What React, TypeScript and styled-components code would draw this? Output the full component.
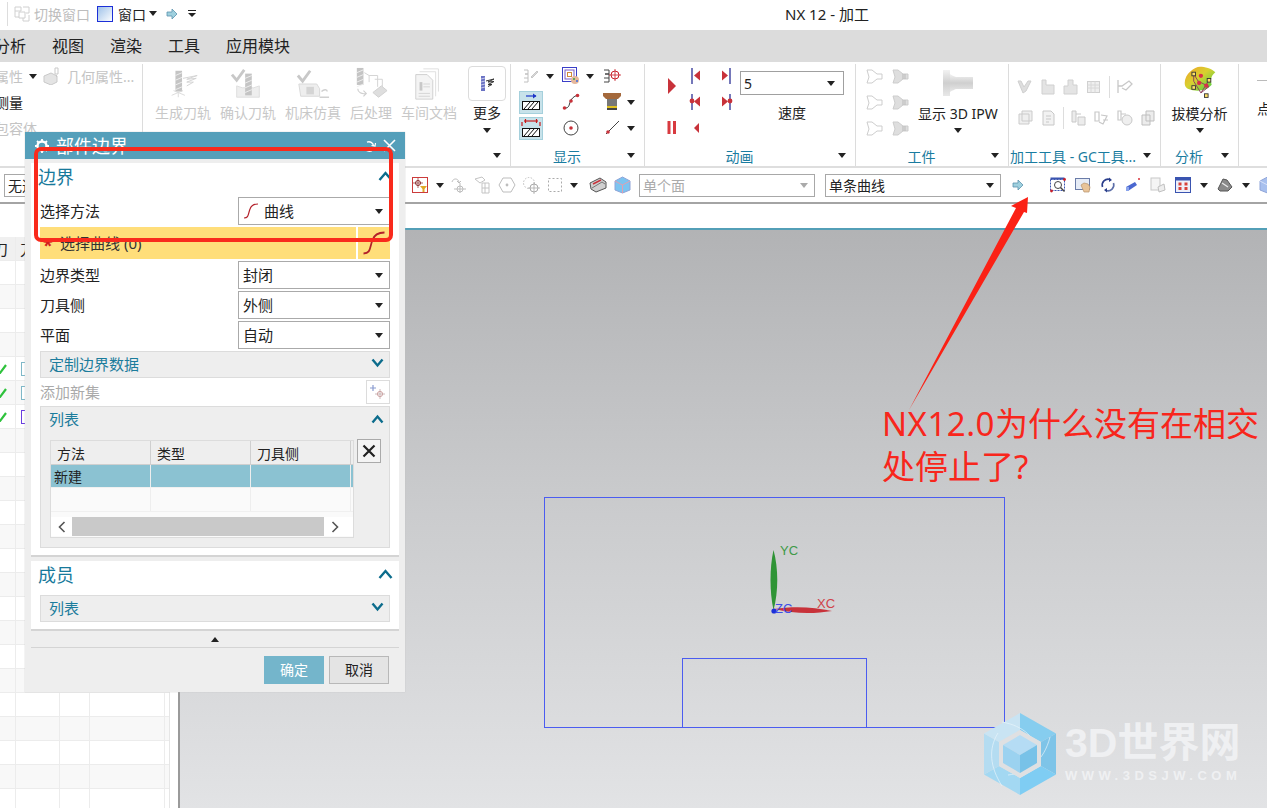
import * as React from "react";
import styled, { createGlobalStyle } from "styled-components";

const GlobalStyle = createGlobalStyle`
  html, body {
    margin: 0;
    padding: 0;
    background: #fff;
  }
  * {
    box-sizing: border-box;
  }
`;

const FONT = `"Noto Sans", "Noto Sans CJK SC", sans-serif`;

const Page = styled.div`
  position: relative;
  width: 1267px;
  height: 808px;
  overflow: hidden;
  display: flex;
  flex-direction: column;
  font-family: ${FONT};
  font-size: 15px;
  color: #222;
  background: #fff;
`;

/* ---------- top bars ---------- */

const TitleBar = styled.div`
  height: 30px;
  padding-bottom: 3px;
  display: grid;
  grid-template-columns: 785px auto;
  align-items: center;
  background: #fff;
`;

const QuickBar = styled.div`
  display: flex;
  align-items: center;
  font-size: 14px;
  white-space: nowrap;
`;

const QuickSep = styled.span`
  width: 1px;
  height: 24px;
  margin: 0 6px 0 7px;
  background: #ddd;
`;

const QuickText = styled.span<{ $off?: boolean }>`
  margin: 0 ${(p) => (p.$off ? 7 : 3)}px 0 ${(p) => (p.$off ? 4 : 5)}px;
  color: ${(p) => (p.$off ? "#bdbdbd" : "#222")};
`;

const QuickGap = styled.span<{ $w: number }>`
  flex: 0 0 ${(p) => p.$w}px;
`;

const AppTitle = styled.div`
  font-size: 15px;
  color: #222;
`;

const MenuBar = styled.div`
  height: 32px;
  padding-bottom: 2px;
  display: flex;
  align-items: center;
  gap: 26px;
  background: #dcdcdc;
  font-size: 16px;
  overflow: hidden;
`;

const MenuItem = styled.span<{ $cut?: boolean }>`
  color: #222;
  margin-left: ${(p) => (p.$cut ? -6 : 0)}px;
`;

/* ---------- ribbon ---------- */

const Ribbon = styled.div`
  height: 106px;
  display: flex;
  background: #fff;
  border-bottom: 2px solid #dedede;
  overflow: hidden;
`;

const Group = styled.div<{ $w: number }>`
  position: relative;
  flex: 0 0 ${(p) => p.$w}px;
  width: ${(p) => p.$w}px;
  height: 102px;
  margin-top: 2px;
  display: flex;
  flex-direction: column;
  border-right: 1px solid #dcdcdc;
`;

const GroupBody = styled.div<{ $center?: boolean }>`
  flex: 1;
  display: flex;
  justify-content: ${(p) => (p.$center ? "center" : "flex-start")};
  min-height: 0;
`;

const GroupFoot = styled.div`
  height: 22px;
  display: flex;
  align-items: center;
  color: #1a7ca0;
  font-size: 14px;
`;

const FootLabel = styled.span<{ $long?: boolean }>`
  flex: 1;
  min-width: 0;
  padding: 2px 0 0 ${(p) => (p.$long ? 1 : 5)}px;
  text-align: ${(p) => (p.$long ? "left" : "center")};
  white-space: nowrap;
  overflow: ${(p) => (p.$long ? "visible" : "hidden")};
`;

const FootCaret = styled.span`
  flex: 0 0 26px;
  display: flex;
  justify-content: center;
`;

const Caret = styled.span<{ $up?: boolean; $c?: string }>`
  display: inline-block;
  flex: none;
  width: 0;
  height: 0;
  border-left: 4px solid transparent;
  border-right: 4px solid transparent;
  border-${(p) => (p.$up ? "bottom" : "top")}: 5px solid ${(p) => p.$c || "#222"};
`;

const PropColumn = styled.div`
  display: flex;
  flex-direction: column;
  margin: -1px 0 0 -5px;
  font-size: 14px;
  white-space: nowrap;
`;

const PropRow = styled.div<{ $off?: boolean }>`
  height: 26px;
  display: flex;
  align-items: center;
  gap: 6px;
  color: ${(p) => (p.$off ? "#c4c4c4" : "#222")};
`;

const BigTools = styled.div`
  display: flex;
  gap: 9px;
  padding-left: 12px;
`;

const BigTool = styled.div<{ $off?: boolean; $ml?: number }>`
  margin-left: ${(p) => p.$ml || 0}px;
  display: flex;
  flex-direction: column;
  align-items: center;
  font-size: 14px;
  white-space: nowrap;
  color: ${(p) => (p.$off ? "#c8c8c8" : "#222")};
`;

const BigIcon = styled.div<{ $framed?: boolean }>`
  height: 35px;
  width: ${(p) => (p.$framed ? "38px" : "auto")};
  margin-top: 2px;
  display: flex;
  align-items: center;
  justify-content: center;
  border: 1px solid ${(p) => (p.$framed ? "#dcdcdc" : "transparent")};
  border-radius: 4px;
`;

const BigLabel = styled.div`
  height: 24px;
  margin-bottom: 3px;
  line-height: 24px;
`;

const IconGrid = styled.div<{ $cols: string; $pad: number }>`
  display: grid;
  grid-template-columns: ${(p) => p.$cols};
  grid-auto-rows: 26px;
  margin-top: -1px;
  padding-left: ${(p) => p.$pad}px;
  align-items: center;
`;

const GridCell = styled.div<{ $center?: boolean }>`
  display: flex;
  align-items: center;
  justify-content: ${(p) => (p.$center ? "center" : "flex-start")};
  gap: 3px;
  min-width: 0;
`;

const IconBox = styled.span<{ $on?: boolean }>`
  width: 24px;
  height: 23px;
  display: flex;
  align-items: center;
  justify-content: center;
  background: ${(p) => (p.$on ? "#c8e2ea" : "transparent")};
  border: 1px solid ${(p) => (p.$on ? "#a5d0dc" : "transparent")};
`;

const PlaySpan = styled.div`
  grid-row: 1 / span 2;
  display: flex;
  justify-content: center;
  padding-bottom: 6px;
`;

const SpeedColumn = styled.div`
  width: 104px;
  padding-top: 7px;
  display: flex;
  flex-direction: column;
  align-items: center;
  font-size: 14px;
`;

const SpeedSelect = styled.div`
  width: 104px;
  height: 24px;
  padding: 0 8px 0 3px;
  display: flex;
  align-items: center;
  justify-content: space-between;
  border: 1px solid #a0a0a0;
`;

const SpeedLabel = styled.div`
  margin-top: 7px;
`;

const CenterTool = styled.div`
  display: flex;
  flex-direction: column;
  align-items: center;
  font-size: 14px;
  white-space: nowrap;
`;

const ToolArt = styled.div`
  height: 38px;
  display: flex;
  align-items: center;
  justify-content: center;
`;

const ToolText = styled.div`
  height: 24px;
  line-height: 24px;
`;

const ToolCaret = styled.div`
  height: 9px;
  display: flex;
  align-items: center;
`;

const IconRows = styled.div`
  display: flex;
  flex-direction: column;
  gap: 9px;
  padding: 12px 0 0 8px;
`;

const IconLine = styled.div`
  display: flex;
  align-items: center;
  gap: 7px;
`;

const ThinSep = styled.span`
  width: 1px;
  height: 22px;
  background: #ddd;
`;

const PointStub = styled.div`
  padding: 10px 0 0 18px;
  display: flex;
  flex-direction: column;
  font-size: 14px;
  white-space: nowrap;
`;

const StubDash = styled.div`
  width: 12px;
  height: 1px;
  background: #bbb;
  margin: 8px 0 17px;
`;

/* ---------- selection bar ---------- */

const SelectBar = styled.div`
  height: 36px;
  padding-left: 4px;
  display: flex;
  align-items: center;
  gap: 8px;
  background: #fff;
  border-bottom: 2px solid #a4a4a4;
  overflow: hidden;
`;

const BarSelect = styled.div<{ $w: number; $off?: boolean; $gap?: number }>`
  flex: 0 0 ${(p) => p.$w}px;
  height: 23px;
  padding: 0 6px 0 3px;
  margin-right: ${(p) => p.$gap || 0}px;
  display: flex;
  align-items: center;
  justify-content: space-between;
  font-size: 14px;
  color: ${(p) => (p.$off ? "#aaa" : "#222")};
  border: 1px solid #a8a8a8;
`;

const FilterBtn = styled.span`
  width: 16px;
  height: 16px;
  display: flex;
  align-items: center;
  justify-content: center;
  border: 1px solid #cc3b3b;
`;

const BarSep = styled.span`
  width: 1px;
  height: 28px;
  margin: 0 5px 0 5px;
  background: #d4d4d4;
`;

const BarGroup = styled.div<{ $gap: number; $ml?: number }>`
  display: flex;
  align-items: center;
  gap: ${(p) => p.$gap}px;
  margin-left: ${(p) => p.$ml || 0}px;
`;

/* ---------- workspace ---------- */

const Workspace = styled.div`
  flex: 1;
  min-height: 0;
  display: flex;
`;

const Navigator = styled.div`
  flex: 0 0 180px;
  padding-top: 33px;
  border-right: 2px solid #9a9a9a;
  background: #fff;
  overflow: hidden;
`;

const NavTable = styled.div`
  width: 170px;
  height: 100%;
  border-right: 1px solid #e6e6e6;
  overflow: hidden;
`;

const NavRow = styled.div<{ $head?: boolean; $alt?: boolean }>`
  height: 24px;
  display: grid;
  grid-template-columns: 16px 44px 30px 75px 4px;
  background: ${(p) => (p.$head ? "#f0f0f0" : p.$alt ? "#f8f8f8" : "#fff")};
  border-bottom: 1px solid #ececec;
`;

const NavCell = styled.div<{ $cut?: boolean }>`
  display: flex;
  align-items: center;
  border-right: 1px solid #ececec;
  font-size: 15px;
  overflow: hidden;
  white-space: nowrap;
  padding-left: ${(p) => (p.$cut ? 0 : 4)}px;
  text-indent: ${(p) => (p.$cut ? -7 : 0)}px;
`;

const NavMark = styled.span<{ $c: string }>`
  width: 9px;
  height: 14px;
  margin-left: 1px;
  border: 1px solid ${(p) => p.$c};
  background: #fff;
`;

const ViewColumn = styled.div`
  flex: 1;
  display: flex;
  flex-direction: column;
  min-width: 0;
`;

const ViewTabs = styled.div`
  height: 24px;
  background: #fff;
`;

const Canvas = styled.div`
  position: relative;
  flex: 1;
  background: linear-gradient(#b2b3b5 0%, #c9cacc 45%, #e2e3e5 100%);
  border-top: 2px solid #539fb7;
`;

const SketchRect = styled.div<{ $l: number; $t: number; $w: number; $h: number }>`
  position: absolute;
  left: ${(p) => p.$l}px;
  top: ${(p) => p.$t}px;
  width: ${(p) => p.$w}px;
  height: ${(p) => p.$h}px;
  border: 1px solid #4b5cf0;
`;

const Triad = styled.svg`
  position: absolute;
  left: 560px;
  top: 300px;
`;

const Watermark = styled.div`
  position: absolute;
  left: 804px;
  top: 483px;
  display: flex;
  gap: 9px;
`;

const WatermarkText = styled.div`
  padding-top: 10px;
  font-family: "Liberation Sans", "Noto Sans CJK SC", sans-serif;
  color: #eff0f2;
`;

const WatermarkName = styled.div`
  font-size: 41px;
  line-height: 40px;
  font-weight: 700;
  white-space: nowrap;
`;

const WatermarkUrl = styled.div`
  margin-top: 6px;
  font-size: 13px;
  line-height: 14px;
  letter-spacing: 4.5px;
  font-weight: 700;
  white-space: nowrap;
`;

/* ---------- dialog ---------- */

const Dialog = styled.div`
  position: absolute;
  left: 25px;
  top: 132px;
  width: 380px;
  height: 560px;
  display: flex;
  flex-direction: column;
  background: #eeeeee;
  box-shadow: 0 0 1px #bbb;
`;

const DialogTitle = styled.div`
  height: 27px;
  padding: 0 9px;
  display: flex;
  align-items: center;
  gap: 7px;
  background: #559fba;
  color: #fff;
  font-size: 18px;
  flex: none;
`;

const DialogTitleText = styled.span`
  flex: 1;
  line-height: 27px;
  margin: 2px 0 0 -1px;
`;

const DialogBody = styled.div`
  margin: 4px 6px 0;
  display: flex;
  flex-direction: column;
  gap: 4px;
`;

const Section = styled.div<{ $pb: number }>`
  padding: 0 9px ${(p) => p.$pb}px;
  display: flex;
  flex-direction: column;
  gap: 2px;
  background: #fff;
  border-bottom: 2px solid #d4d4d4;
`;

const SectionHead = styled.div`
  height: 32px;
  margin: 0 -3px 0 -2px;
  padding-bottom: 6px;
  display: flex;
  align-items: center;
  justify-content: space-between;
  font-size: 18px;
  color: #17799b;
`;

const FieldRow = styled.div`
  height: 28px;
  display: flex;
  align-items: center;
  justify-content: space-between;
`;

const FieldLabel = styled.span`
  margin-top: -2px;
`;

const FieldSelect = styled.div`
  width: 152px;
  height: 28px;
  padding: 0 6px 0 4px;
  display: flex;
  align-items: center;
  gap: 5px;
  border: 1px solid #aaaaaa;
  background: #fff;
`;

const FieldValue = styled.span`
  flex: 1;
  margin-top: -2px;
`;

const PickRow = styled.div`
  height: 32px;
  display: flex;
  gap: 2px;
`;

const PickMain = styled.div`
  flex: 1;
  padding: 0 0 2px 3px;
  display: flex;
  align-items: center;
  gap: 7px;
  background: #ffde7a;
  color: #333;
`;

const PickStar = styled.span`
  width: 10px;
  color: #d21f1f;
  font-size: 18px;
  line-height: 18px;
  font-weight: 700;
  padding-top: 5px;
`;

const PickSide = styled.div`
  width: 32px;
  display: flex;
  align-items: center;
  justify-content: center;
  background: #ffde7a;
`;

const Panel = styled.div`
  background: #eeeeee;
  border: 1px solid #dcdcdc;
`;

const PanelHead = styled.div`
  height: 25px;
  padding: 0 5px 3px 8px;
  display: flex;
  align-items: center;
  justify-content: space-between;
  color: #1b7c9c;
`;

const AddRow = styled.div`
  height: 24px;
  display: flex;
  align-items: center;
  justify-content: space-between;
  color: #aaa;
`;

const AddBtn = styled.span`
  width: 24px;
  height: 24px;
  display: flex;
  align-items: center;
  justify-content: center;
  border: 1px solid #dcdcdc;
`;

const ListHead = styled(PanelHead)`
  height: 28px;
  padding-bottom: 5px;
  margin-bottom: 5px;
`;

const ListBody = styled.div`
  padding: 0 8px 9px 9px;
  display: flex;
  gap: 3px;
  align-items: flex-start;
`;

const ListTable = styled.div`
  width: 304px;
  height: 98px;
  padding-bottom: 1px;
  display: flex;
  flex-direction: column;
  border: 1px solid #dcdcdc;
  background: #fafafa;
`;

const ListRow = styled.div<{ $sel?: boolean; $head?: boolean }>`
  height: ${(p) => (p.$sel ? 23 : 24)}px;
  flex: none;
  display: grid;
  grid-template-columns: 100px 100px 100px 1fr;
  background: ${(p) => (p.$head ? "#eeeeee" : p.$sel ? "#8bc2d2" : "#fafafa")};
  border-bottom: 1px solid ${(p) => (p.$head ? "#cfcfcf" : "#f0f0f0")};
`;

const ListCell = styled.div<{ $head?: boolean }>`
  padding-left: ${(p) => (p.$head ? 6 : 3)}px;
  display: flex;
  align-items: center;
  font-size: 14px;
  border-right: 1px solid ${(p) => (p.$head ? "#cfcfcf" : "#eeeeee")};
`;

const ScrollBar = styled.div`
  height: 19px;
  margin-top: auto;
  display: flex;
  align-items: center;
  background: #fff;
`;

const ScrollEnd = styled.span`
  flex: 0 0 21px;
  display: flex;
  justify-content: center;
`;

const ScrollThumb = styled.div`
  width: 252px;
  height: 100%;
  background: #c9c9c9;
`;

const ClearBtn = styled.span`
  width: 24px;
  height: 24px;
  margin-top: -1px;
  display: flex;
  align-items: center;
  justify-content: center;
  border: 1px solid #aaa;
  background: #f4f4f4;
`;

const ExpandStrip = styled.div`
  margin-top: -4px;
  height: 17px;
  display: flex;
  align-items: center;
  justify-content: center;
  border-bottom: 1px solid #d4d4d4;
`;

const DialogFoot = styled.div`
  padding: 8px 16px 0 0;
  display: flex;
  justify-content: flex-end;
  gap: 5px;
`;

const FootBtn = styled.button<{ $primary?: boolean }>`
  width: 60px;
  height: 28px;
  padding: 0 0 2px;
  font-family: inherit;
  font-size: 14px;
  color: ${(p) => (p.$primary ? "#fff" : "#222")};
  background: ${(p) => (p.$primary ? "#74b5cb" : "#e4e4e4")};
  border: 1px solid ${(p) => (p.$primary ? "#74b5cb" : "#b8b8b8")};
`;

/* ---------- red annotations ---------- */

const RedBox = styled.div`
  position: absolute;
  left: 34px;
  top: 147px;
  width: 359px;
  height: 95px;
  border: 4px solid #f92a1c;
  border-radius: 7px;
`;

const RedArrow = styled.svg`
  position: absolute;
  left: 900px;
  top: 190px;
`;

const RedNote = styled.div`
  position: absolute;
  left: 882px;
  top: 402px;
  width: 380px;
  font-size: 33px;
  line-height: 43px;
  color: #f8261c;
`;

const NoteLatin = styled.span`
  letter-spacing: 0.5px;
`;

/* ---------- icons ---------- */

const Ic: React.FC<{ w?: number; h?: number; v?: string; children: React.ReactNode }> = ({
  w = 16,
  h = 16,
  v,
  children,
}) => (
  <svg width={w} height={h} viewBox={v || `0 0 ${w} ${h}`} fill="none" style={{ flex: "none" }}>
    {children}
  </svg>
);

const Chevron: React.FC<{ up?: boolean; big?: boolean }> = ({ up, big }) => (
  <Ic w={big ? 15 : 13} h={10}>
    <path
      d={up ? (big ? "M1.5 9 7.5 2l6 7" : "M1.5 8.5 6.5 2.5l5 6") : "M1.5 1.5 6.5 7.5l5-6"}
      stroke="#0c6c8c"
      strokeWidth={2.4}
    />
  </Ic>
);

const CurveIcon: React.FC<{ s?: number }> = ({ s = 16 }) => (
  <Ic w={s} h={s} v="0 0 16 16">
    <path d="M1 15c5 0 4-4 6-9 1-3 3-5 8-5" stroke="#b3202a" strokeWidth={1.2} />
  </Ic>
);

const GearIcon = () => (
  <Ic>
    <circle cx={8} cy={8} r={4.5} stroke="#fff" strokeWidth={2.4} />
    <path d="M8 1v3M8 12v3M1 8h3M12 8h3M3 3l2 2M11 11l2 2M13 3l-2 2M5 11l-2 2" stroke="#fff" strokeWidth={1.8} />
  </Ic>
);

const Refresh = () => (
  <Ic w={14} h={14}>
    <path d="M3 9a4.6 4.6 0 0 0 8 1.5M5 3.2A4.6 4.6 0 0 1 11.5 7" stroke="#fff" strokeWidth={1.4} />
    <path d="M9.5 6.5 13 7l.5-3" stroke="#fff" strokeWidth={1.2} />
  </Ic>
);

const CloseX = () => (
  <Ic w={13} h={13}>
    <path d="M1 1l11 11M12 1 1 12" stroke="#fff" strokeWidth={1.6} />
  </Ic>
);

const Arrow = () => (
  <Ic w={12} h={12}>
    <path d="M1 4h5V1l5 5-5 5V8H1z" fill="#9fd0de" stroke="#5c93ad" strokeWidth={0.8} />
  </Ic>
);

const WindowIcon = () => (
  <Ic>
    <defs>
      <linearGradient id="winGrad" x1="0" y1="0" x2="1" y2="1">
        <stop offset="0" stopColor="#9cc0e8" />
        <stop offset="1" stopColor="#fff" />
      </linearGradient>
    </defs>
    <rect x={0.5} y={0.5} width={15} height={15} fill="url(#winGrad)" stroke="#1c2fd8" />
  </Ic>
);

const SwitchIcon = () => (
  <Ic>
    <path d="M1 1h6v4H1zM1 5v6h4M9 1h6v6h-3M5 6h6v6H5zM9 12v3h6V9" stroke="#d0d0d0" strokeWidth={1} />
  </Ic>
);

const BarDrop = () => (
  <Ic w={10} h={8}>
    <path d="M1 .5h8" stroke="#222" />
    <path d="M1 3h8L5 7z" fill="#222" />
  </Ic>
);

const GEOM_GRAY = "#c9c9c9";

const Mill: React.FC<{ x: number; y: number; h: number; c?: string }> = ({ x, y, h, c = "#c4c4c4" }) => (
  <g>
    <rect x={x} y={y} width={7} height={h} fill={c} />
    <path
      d={`M${x} ${y + 5}l7-3M${x} ${y + 10}l7-3M${x} ${y + 15}l7-3M${x} ${y + 20}l7-3`}
      stroke="#eee"
      strokeWidth={1}
    />
  </g>
);

const ToolpathArt = () => (
  <Ic w={36} h={34} v="0 0 36 36">
    <Mill x={10} y={4} h={22} />
    <path d="M18 12 33 9 22 13l10-1-10 4 7 0-7 4" stroke="#d2d2d2" strokeWidth={1} />
    <path d="M6 30l7-3 7 3M13 27v5M8 25l5 2 5-2" stroke="#dadada" strokeWidth={1} />
  </Ic>
);

const VerifyArt = () => (
  <Ic w={36} h={34} v="0 0 36 36">
    <path d="M1 8l5 6L14 3" stroke="#c8c8c8" strokeWidth={3} />
    <path d="M6 20v12h24V20l-6 2H12z" fill="#eeeeee" stroke="#dedede" />
    <Mill x={15} y={7} h={23} />
  </Ic>
);

const MachineArt = () => (
  <Ic w={36} h={34} v="0 0 36 36">
    <path d="M2 9l5 6 8-11" stroke="#c8c8c8" strokeWidth={3} />
    <path d="M3 18h19l3 5v8H5z" fill="#eeeeee" stroke="#d8d8d8" />
    <rect x={11} y={21} width={8} height={8} fill="#d4d4d4" />
    <path d="M27 26c3-3 6-2 6 0M25 32h10" stroke="#d0d0d0" strokeWidth={1.5} />
  </Ic>
);

const PostArt = () => (
  <Ic w={36} h={34} v="0 0 36 36">
    <Mill x={3} y={1} h={18} />
    <path d="M11 6l5 3h9v12M16 9v7M22 13h8v8" stroke="#d2d2d2" />
    <path d="M20 27l9-7 6 5-9 7z" fill="#dedede" stroke="#cfcfcf" />
    <path d="M4 23c0 4 4 6 9 5M10 25l3 3-3 3" stroke="#cfcfcf" strokeWidth={1.2} />
  </Ic>
);

const DocArt = () => (
  <Ic w={36} h={34} v="0 0 36 36">
    <path d="M12 2h16v24M8 5h17v26" stroke="#dedede" />
    <path d="M4 8h12l6 6v20H4z" fill="#f4f4f4" stroke="#cfcfcf" />
    <rect x={8} y={16} width={3} height={9} fill="#c8c8c8" />
    <path d="M12 18h7M12 21h7M7 28h12M7 31h12" stroke="#d4d4d4" />
  </Ic>
);

const MoreArt = () => (
  <Ic w={18} h={18}>
    <rect x={3} y={1} width={4} height={15} fill="#6a72c4" />
    <path d="M3 4l4-1M3 7l4-1M3 10l4-1M3 13l4-1" stroke="#c5c8ea" />
    <path d="M8 6l8-2-6 3 6-.5-6 3 4 0-4 2" stroke="#333" strokeWidth={1} />
  </Ic>
);

const ScrewDim = () => (
  <Ic>
    <path d="M1 2h4v4H2M2 6h3v4H1M1 14h4v-4" stroke="#c0c0c0" strokeWidth={1} />
    <path d="M8 9l6-6 1 1-6 6z" fill="#d8d8d8" stroke="#c8c8c8" />
  </Ic>
);

const NestIcon = () => (
  <Ic w={18} h={18}>
    <rect x={0.5} y={0.5} width={14} height={14} stroke="#3a3ec8" />
    <rect x={3} y={3} width={9} height={9} stroke="#7a5cc8" />
    <rect x={5.5} y={5.5} width={4} height={4} stroke="#d08a3c" />
    <circle cx={13} cy={13} r={4} fill="#e6b89c" />
    <circle cx={12} cy={12} r={1} fill="#3aa04a" />
    <circle cx={15} cy={14} r={1} fill="#3a6ee0" />
  </Ic>
);

const DimTarget = () => (
  <Ic w={18} h={16}>
    <path d="M1 2h5v4H2M2 6h4v4H1M1 14h5v-4" stroke="#444" strokeWidth={1} />
    <circle cx={12} cy={7} r={4} stroke="#c8202a" />
    <path d="M12 1v12M6 7h12" stroke="#c8202a" strokeWidth={0.8} />
  </Ic>
);

const HatchRight = () => (
  <Ic w={20} h={18}>
    <path d="M5 3h10" stroke="#1c34c8" strokeWidth={1.2} />
    <path d="M12 0.5 15.5 3 12 5.5z" fill="#1c34c8" />
    <rect x={1.5} y={8.5} width={17} height={8} fill="#fff" stroke="#111" />
    <path d="M3 16l6-7M7 16l6-7M11 16l6-7" stroke="#111" />
  </Ic>
);

const HatchBoth = () => (
  <Ic w={20} h={20}>
    <path d="M3 3h14" stroke="#c81c1c" strokeWidth={1.2} />
    <path d="M4.5 1v4M15.5 1v4M1 4v4M19 4v4" stroke="#c81c1c" strokeWidth={1.2} />
    <rect x={1.5} y={10.5} width={17} height={8} fill="#fff" stroke="#111" />
    <path d="M3 18l6-7M7 18l6-7M11 18l6-7" stroke="#111" />
  </Ic>
);

const SplineDots = () => (
  <Ic w={18} h={18}>
    <path d="M2 15c6 1 5-5 7-8 2-3 4-4 7-5" stroke="#333" strokeWidth={1} />
    <circle cx={2.5} cy={15} r={1.8} fill="#c8323a" />
    <circle cx={9} cy={8} r={1.8} fill="#c8323a" />
    <circle cx={15.5} cy={2.5} r={1.8} fill="#c8323a" />
  </Ic>
);

const CutterTool = () => (
  <Ic w={18} h={18}>
    <path d="M0 0h18v3l-3 3H3L0 3z" fill="#a4693c" />
    <rect x={4} y={6} width={10} height={7} fill="#777" />
    <rect x={4} y={13} width={10} height={2} fill="#e0c020" />
    <rect x={4} y={15} width={10} height={2} fill="#444" />
  </Ic>
);

const CircleCenter = () => (
  <Ic w={18} h={18}>
    <circle cx={9} cy={9} r={7} stroke="#444" />
    <circle cx={9} cy={9} r={1.8} fill="#c8323a" />
  </Ic>
);

const LineDot = () => (
  <Ic>
    <path d="M2 14 15 1" stroke="#444" />
    <circle cx={4} cy={12} r={1.8} fill="#c8323a" />
  </Ic>
);

const Step: React.FC<{ dir: "l" | "r"; both?: boolean }> = ({ dir, both }) => {
  const bar = dir === "l" ? 4 : 11;
  return (
    <Ic w={16} h={18}>
      <path d={`M${bar} 1v16`} stroke="#3a3e9c" strokeWidth={1.4} />
      {dir === "l" ? <path d="M12 3.5v10L6 8.5z" fill="#c8323a" /> : <path d="M3 3.5v10l6-5z" fill="#c8323a" />}
      {both && <circle cx={bar} cy={8} r={2.4} fill="#c8323a" />}
    </Ic>
  );
};

const PlayIcon = () => (
  <Ic w={10} h={16}>
    <path d="M1 0v16l8-8z" fill="#c8323a" />
  </Ic>
);

const PauseIcon = () => (
  <Ic w={10} h={14}>
    <rect x={0.5} width={3} height={13} fill="#d83a40" />
    <rect x={6} width={3} height={13} fill="#d83a40" />
  </Ic>
);

const BackIcon = () => (
  <Ic w={16} h={12}>
    <path d="M11 1v10L6 6z" fill="#c8323a" />
  </Ic>
);

const GhostTool: React.FC<{ solid?: boolean }> = ({ solid }) => (
  <Ic w={17} h={15}>
    <path d="M1 1h5l5 4h5v5h-5l-5 4H1l2-6z" fill={solid ? "#dedede" : "#fff"} stroke="#cdcdcd" />
    {solid && <path d="M11 5v5M13 5v5" stroke="#bbb" />}
  </Ic>
);

const IpwArt = () => (
  <Ic w={32} h={30}>
    <defs>
      <linearGradient id="ipwGrad" x1="0" y1="0" x2="0" y2="1">
        <stop offset="0" stopColor="#f2f2f2" />
        <stop offset="0.5" stopColor="#cfcfcf" />
        <stop offset="1" stopColor="#e8e8e8" />
      </linearGradient>
    </defs>
    <path d="M1 2h7v26H1z" fill="url(#ipwGrad)" />
    <path d="M8 6c3 2 4 2 6 3h17v12H14c-2 1-3 1-6 3z" fill="url(#ipwGrad)" />
  </Ic>
);

const GhostBlock: React.FC<{ k: number }> = ({ k }) => (
  <Ic>
    {k === 0 && <path d="M1 2l3 0 3 6 4-6 3 0-5 10-3 2z" fill="#dedede" stroke="#cfcfcf" />}
    {k === 1 && <path d="M2 1h4v5h8v9H2z" fill="#e4e4e4" stroke="#d0d0d0" />}
    {k === 2 && <path d="M5 1h5v5h4v9H1V7h4z" fill="#e4e4e4" stroke="#d0d0d0" />}
    {k === 3 && (
      <g>
        <rect x={1.5} y={2.5} width={12} height={11} fill="#efefef" stroke="#d0d0d0" />
        <path d="M1.5 6h12M1.5 9h12M5 2.5v11M9 2.5v11" stroke="#d8d8d8" />
      </g>
    )}
    {k === 4 && <path d="M1 1v13M1 7h4l7-5 3 3-6 6-4-2" stroke="#c8c8c8" strokeWidth={1.3} />}
    {k === 5 && <path d="M5 1h10v10H5zM2 4h10v10H2z" fill="#efefef" stroke="#cbcbcb" />}
    {k === 6 && <path d="M3 1h8l3 3v11H3zM6 6h5M6 9h5M6 12h3" fill="#f2f2f2" stroke="#c8c8c8" />}
    {k === 7 && <path d="M1 1v11h4V1zM7 7h7v8H7zM5 4h5" fill="#ececec" stroke="#c8c8c8" />}
    {k === 8 && <path d="M1 2v9h4V2zM7 5l6 1-2 4-2 4-4-2M9 10h5" stroke="#c8c8c8" strokeWidth={1.2} />}
    {k === 9 && (
      <g>
        <path d="M1 1v9h3V1zM4 4h5" stroke="#c8c8c8" strokeWidth={1.2} />
        <circle cx={10} cy={10} r={5} fill="#efefef" stroke="#c8c8c8" />
      </g>
    )}
    {k === 10 && <path d="M6 1h8v10H6zM2 5h8v10H2z" fill="#ececec" stroke="#bfbfbf" />}
  </Ic>
);

const DraftArt = () => (
  <Ic w={36} h={36} v="0 0 40 38">
    <defs>
      <linearGradient id="draftGrad" x1="0" y1="0" x2="1" y2="1">
        <stop offset="0" stopColor="#f2a028" />
        <stop offset="0.45" stopColor="#d8d030" />
        <stop offset="1" stopColor="#38d048" />
      </linearGradient>
    </defs>
    <path d="M3 19C3 9 14 1 20 1c5 0 13 2 17 6-6 5-5 10-4 14-6 7-15 7-21 6C6 26 3 24 3 19z" fill="url(#draftGrad)" />
    <path d="M13 9l5 8 12 6-9 7-8-13zM21 30l9-14" stroke="#8a3a5a" strokeWidth={1} />
    <circle cx={21} cy={11} r={2.4} fill="#d8304a" />
    <circle cx={19} cy={19} r={2.4} fill="#d8304a" />
    <circle cx={27} cy={22} r={2.4} fill="#d8304a" />
    <rect x={11} y={7} width={4} height={4} fill="#ffe06a" stroke="#333" />
    <rect x={28} y={14} width={4} height={4} fill="#ffe06a" stroke="#333" />
    <rect x={11} y={22} width={4} height={4} fill="#ffe06a" stroke="#333" />
    <rect x={25} y={31} width={4} height={4} fill="#ffe06a" stroke="#333" />
  </Ic>
);

const FilterIcon = () => (
  <Ic w={14} h={14}>
    <circle cx={5} cy={5} r={2.5} stroke="#8a2a2a" />
    <path d="M5 0v10M0 5h10" stroke="#8a2a2a" strokeWidth={0.7} />
    <path d="M7 8h7l-2.5 3v3h-2v-3z" fill="#e0a828" />
  </Ic>
);

const GrayPick: React.FC<{ k: number }> = ({ k }) => (
  <Ic w={18} h={18}>
    {k === 0 && <path d="M2 6c1-4 6-4 7 0M7 5l2 2 2-2M4 13h12M10 7v10" stroke="#bdbdbd" />}
    {k === 0 && <circle cx={10} cy={13} r={3} stroke="#bdbdbd" />}
    {k === 1 && <path d="M1 3l7-2 3 3-5 3zM8 7h7v10H8zM8 12h7M11 7v10" stroke="#c4c4c4" />}
    {k === 2 && <path d="M5 2h8l4 7-4 7H5L1 9z" stroke="#bdbdbd" />}
    {k === 2 && <circle cx={9} cy={9} r={1.4} fill="#bdbdbd" />}
    {k === 3 && <circle cx={7} cy={7} r={5.5} stroke="#bdbdbd" strokeDasharray="1.5 1.5" />}
    {k === 3 && <circle cx={12} cy={12} r={4} fill="#fff" stroke="#aaa" />}
    {k === 3 && <path d="M12 6v12M6 12h12" stroke="#aaa" strokeWidth={0.8} />}
    {k === 4 && <rect x={2.5} y={2.5} width={13} height={13} stroke="#aaa" strokeDasharray="2 2" />}
  </Ic>
);

const BoxView = () => (
  <Ic w={18} h={16}>
    <path d="M1 6l10-5 6 4v6L7 15 2 12z" fill="#d0d0d0" stroke="#555" />
    <path d="M4 7l8-4" stroke="#c8323a" strokeWidth={1.4} />
    <path d="M3 11l10-6 3 2" stroke="#777" />
  </Ic>
);

const CubeBlue: React.FC<{ faint?: boolean }> = ({ faint }) => (
  <Ic w={17} h={18}>
    <path d="M8.5 1 16 5v9l-7.5 3L1 14V5z" fill={faint ? "#a8c0ee" : "#7cc4f0"} stroke="#8fa4d8" />
    <path d="M1 5l7.5 4L16 5M8.5 9v8" stroke={faint ? "#d8e2f8" : "#e2a0b0"} />
  </Ic>
);

const ZoomFit = () => (
  <Ic>
    <rect x={0.5} y={2.5} width={14} height={11} fill="#fff" stroke="#3a54b0" strokeDasharray="2 1" />
    <rect x={0.5} y={0.5} width={14} height={2} fill="#3a54b0" />
    <circle cx={8} cy={8} r={3.5} stroke="#444" />
    <path d="M10.5 10.5l4 4" stroke="#444" strokeWidth={1.4} />
    <circle cx={1.5} cy={14} r={1.4} fill="#c8202a" />
    <circle cx={14.5} cy={2.5} r={1.4} fill="#c8202a" />
  </Ic>
);

const PanHand = () => (
  <Ic>
    <rect x={0.5} y={1.5} width={14} height={11} fill="#e6ecf6" stroke="#6a7ca8" />
    <path d="M6 8l3-2 4 1 2 3-1 5h-5z" fill="#e8c49a" stroke="#b8946a" strokeWidth={0.7} />
  </Ic>
);

const OrbitIcon = () => (
  <Ic>
    <path d="M2.5 10A6 6 0 0 1 10 2.4" stroke="#2a3e8c" strokeWidth={1.6} />
    <path d="M13.5 6A6 6 0 0 1 6 13.6" stroke="#5c6ea8" strokeWidth={1.6} />
    <path d="M9 .5 12 3 9 5zM7 11 4 13l3 2.5z" fill="#2a3e8c" />
  </Ic>
);

const PrismDot = () => (
  <Ic>
    <path d="M1 10l9-5 2 3-9 6H1z" fill="#4a68d0" />
    <path d="M1 10h3v4H1z" fill="#8aa4ec" />
    <circle cx={14} cy={2} r={1} fill="#d8303a" />
  </Ic>
);

const GhostSheet = () => (
  <Ic>
    <rect x={1} y={1} width={9} height={12} fill="#f4f4f4" stroke="#c8c8c8" />
    <path d="M8 10l6-3 1 6-6 2z" fill="#eee" stroke="#c0c0c0" />
  </Ic>
);

const LayoutGrid = () => (
  <Ic>
    <rect x={0.5} y={0.5} width={15} height={15} fill="#eef0fa" stroke="#3a54b0" />
    <rect x={0.5} y={0.5} width={15} height={3} fill="#3a54b0" />
    <rect x={3.5} y={5.5} width={3} height={3} fill="#d8403a" />
    <rect x={9.5} y={5.5} width={3} height={3} fill="#d8403a" />
    <rect x={3.5} y={10} width={3} height={3} fill="#d8403a" />
    <rect x={9.5} y={10} width={3} height={3} fill="#d8403a" />
  </Ic>
);

const ScannerIcon = () => (
  <Ic>
    <path d="M1 12l5-10 4 1 5 7-4 4H3z" fill="#8a8a8a" stroke="#555" />
    <path d="M5 6l6 4" stroke="#e8e8e8" strokeWidth={1.4} />
  </Ic>
);

const AddSet = () => (
  <Ic>
    <path d="M3 1v6M0 4h6" stroke="#8a9cd0" strokeWidth={1.2} />
    <circle cx={10} cy={10} r={2.6} stroke="#d0a0a0" />
    <path d="M10 5v10M5 10h10" stroke="#c0a8a8" strokeWidth={0.8} />
  </Ic>
);

const ClearX = () => (
  <Ic w={14} h={14}>
    <path d="M1.5 1.5l11 11M12.5 1.5l-11 11" stroke="#222" strokeWidth={2.2} />
  </Ic>
);

const ScrollArrow: React.FC<{ right?: boolean }> = ({ right }) => (
  <Ic w={8} h={12}>
    <path d={right ? "M1.5 1 6.5 6l-5 5" : "M6.5 1 1.5 6l5 5"} stroke="#555" strokeWidth={1.6} />
  </Ic>
);

const GeomIcon = () => (
  <Ic w={18} h={18}>
    <path d="M1 9l7-3 6 3v6l-6 3-7-3z" fill="#e4e4e4" stroke={GEOM_GRAY} />
    <path d="M12 1v6h3V1zM13.5 8v2" stroke={GEOM_GRAY} />
  </Ic>
);

const BrandLogo = () => {
  const outer = [
    [36, 0],
    [72, 20.5],
    [72, 61.5],
    [36, 82],
    [0, 61.5],
    [0, 20.5],
  ];
  const inner = [
    [36, 17],
    [57, 29],
    [57, 53],
    [36, 65],
    [15, 53],
    [15, 29],
  ];
  const shades = ["#86cdef", "#7ec4e8", "#7fcdf3", "#a3d8f2", "#b4dcf1", "#c9e4f3"];
  return (
    <Ic w={72} h={82}>
      {outer.map((pt, i) => {
        const nx = (i + 1) % 6;
        return (
          <polygon
            key={i}
            points={`${pt[0]},${pt[1]} ${outer[nx][0]},${outer[nx][1]} ${inner[nx][0]},${inner[nx][1]} ${inner[i][0]},${inner[i][1]}`}
            fill={shades[i]}
          />
        );
      })}
      <path d="M18 9c22 4 34 16 36 32M66 24C60 48 44 60 24 62M18 73C6 54 4 36 14 20" stroke="#e6f3fa" strokeWidth={0.7} />
      <polygon points={inner.map((p) => p.join(",")).join(" ")} fill="#dfe0e2" />
      <polygon points="36,22 53,32 36,42 19,32" fill="#b5dcf4" />
      <polygon points="19,32 36,42 36,60 19,50" fill="#9bd2f0" />
      <polygon points="53,32 36,42 36,60 53,50" fill="#78c2e8" />
    </Ic>
  );
};

/* ---------- data ---------- */

const bigTools = [
  { label: "生成刀轨", art: <ToolpathArt /> },
  { label: "确认刀轨", art: <VerifyArt /> },
  { label: "机床仿真", art: <MachineArt /> },
  { label: "后处理", art: <PostArt /> },
  { label: "车间文档", art: <DocArt /> },
];

const navMarks: Record<number, string> = { 4: "#7fb8c8", 5: "#7fb8c8", 6: "#6a3ee0" };

const NavCheck = () => (
  <Ic w={8} h={10}>
    <path d="M-2 7l2 2 6-8" stroke="#2ec23c" strokeWidth={2.2} />
  </Ic>
);

const fieldRows = [
  { label: "边界类型", value: "封闭" },
  { label: "刀具侧", value: "外侧" },
  { label: "平面", value: "自动" },
];

const App: React.FC = () => {
  return (
    <Page>
      <GlobalStyle />

      <TitleBar>
        <QuickBar>
          <QuickSep />
          <SwitchIcon />
          <QuickText $off>切换窗口</QuickText>
          <WindowIcon />
          <QuickText>窗口</QuickText>
          <Caret />
          <QuickGap $w={9} />
          <Arrow />
          <QuickGap $w={9} />
          <BarDrop />
        </QuickBar>
        <AppTitle>NX 12 - 加工</AppTitle>
      </TitleBar>

      <MenuBar>
        <MenuItem $cut>分析</MenuItem>
        <MenuItem>视图</MenuItem>
        <MenuItem>渲染</MenuItem>
        <MenuItem>工具</MenuItem>
        <MenuItem>应用模块</MenuItem>
      </MenuBar>

      <Ribbon>
        <Group $w={143}>
          <PropColumn>
            <PropRow $off>
              属性 <Caret /> <GeomIcon /> 几何属性...
            </PropRow>
            <PropRow>测量</PropRow>
            <PropRow $off>包容体</PropRow>
          </PropColumn>
        </Group>

        <Group $w={368}>
          <GroupBody>
            <BigTools>
              {bigTools.map((t) => (
                <BigTool $off key={t.label}>
                  <BigIcon>{t.art}</BigIcon>
                  <BigLabel>{t.label}</BigLabel>
                </BigTool>
              ))}
              <BigTool $ml={2}>
                <BigIcon $framed>
                  <MoreArt />
                </BigIcon>
                <BigLabel>更多</BigLabel>
                <Caret />
              </BigTool>
            </BigTools>
          </GroupBody>
          <GroupFoot>
            <FootLabel />
            <FootCaret>
              <Caret />
            </FootCaret>
          </GroupFoot>
        </Group>

        <Group $w={134}>
          <GroupBody>
            <IconGrid $cols="40px 41px auto" $pad={8}>
              <GridCell>
                <IconBox>
                  <ScrewDim />
                </IconBox>
                <Caret />
              </GridCell>
              <GridCell>
                <IconBox>
                  <NestIcon />
                </IconBox>
                <Caret />
              </GridCell>
              <GridCell>
                <IconBox>
                  <DimTarget />
                </IconBox>
              </GridCell>
              <GridCell>
                <IconBox $on>
                  <HatchRight />
                </IconBox>
              </GridCell>
              <GridCell>
                <IconBox>
                  <SplineDots />
                </IconBox>
              </GridCell>
              <GridCell>
                <IconBox>
                  <CutterTool />
                </IconBox>
                <Caret />
              </GridCell>
              <GridCell>
                <IconBox $on>
                  <HatchBoth />
                </IconBox>
              </GridCell>
              <GridCell>
                <IconBox>
                  <CircleCenter />
                </IconBox>
              </GridCell>
              <GridCell>
                <IconBox>
                  <LineDot />
                </IconBox>
                <Caret />
              </GridCell>
            </IconGrid>
          </GroupBody>
          <GroupFoot>
            <FootLabel>显示</FootLabel>
            <FootCaret>
              <Caret />
            </FootCaret>
          </GroupFoot>
        </Group>

        <Group $w={211}>
          <GroupBody>
            <IconGrid $cols="33px 31px 21px" $pad={10}>
              <PlaySpan>
                <PlayIcon />
              </PlaySpan>
              <GridCell>
                <Step dir="l" />
              </GridCell>
              <GridCell>
                <Step dir="r" />
              </GridCell>
              <GridCell>
                <Step dir="l" both />
              </GridCell>
              <GridCell>
                <Step dir="r" both />
              </GridCell>
              <GridCell $center>
                <PauseIcon />
              </GridCell>
              <GridCell>
                <BackIcon />
              </GridCell>
            </IconGrid>
            <SpeedColumn>
              <SpeedSelect>
                5 <Caret />
              </SpeedSelect>
              <SpeedLabel>速度</SpeedLabel>
            </SpeedColumn>
          </GroupBody>
          <GroupFoot>
            <FootLabel>动画</FootLabel>
            <FootCaret>
              <Caret />
            </FootCaret>
          </GroupFoot>
        </Group>

        <Group $w={153}>
          <GroupBody>
            <IconGrid $cols="26px 26px" $pad={10}>
              <GhostTool />
              <GhostTool solid />
              <GhostTool />
              <GhostTool solid />
              <GhostTool />
              <GhostTool solid />
            </IconGrid>
            <CenterTool>
              <ToolArt>
                <IpwArt />
              </ToolArt>
              <ToolText>显示 3D IPW</ToolText>
              <ToolCaret>
                <Caret />
              </ToolCaret>
            </CenterTool>
          </GroupBody>
          <GroupFoot>
            <FootLabel>工件</FootLabel>
            <FootCaret>
              <Caret />
            </FootCaret>
          </GroupFoot>
        </Group>

        <Group $w={152}>
          <GroupBody>
            <IconRows>
              <IconLine>
                <GhostBlock k={0} />
                <GhostBlock k={1} />
                <GhostBlock k={2} />
                <GhostBlock k={3} />
                <ThinSep />
                <GhostBlock k={4} />
              </IconLine>
              <IconLine>
                <GhostBlock k={5} />
                <GhostBlock k={6} />
                <ThinSep />
                <GhostBlock k={7} />
                <GhostBlock k={8} />
                <GhostBlock k={9} />
                <GhostBlock k={10} />
              </IconLine>
            </IconRows>
          </GroupBody>
          <GroupFoot>
            <FootLabel $long>加工工具 - GC工具...</FootLabel>
            <FootCaret>
              <Caret />
            </FootCaret>
          </GroupFoot>
        </Group>

        <Group $w={78}>
          <GroupBody $center>
            <CenterTool>
              <ToolArt>
                <DraftArt />
              </ToolArt>
              <ToolText>拔模分析</ToolText>
              <ToolCaret>
                <Caret />
              </ToolCaret>
            </CenterTool>
          </GroupBody>
          <GroupFoot>
            <FootLabel>分析</FootLabel>
            <FootCaret>
              <Caret />
            </FootCaret>
          </GroupFoot>
        </Group>

        <PointStub>
          <StubDash />
          点
        </PointStub>
      </Ribbon>

      <SelectBar>
        <BarSelect $w={400}>无选择过滤器</BarSelect>
        <FilterBtn>
          <FilterIcon />
        </FilterBtn>
        <Caret />
        <BarGroup $gap={6} $ml={-2}>
          <GrayPick k={0} />
          <GrayPick k={1} />
          <GrayPick k={2} />
          <GrayPick k={3} />
          <GrayPick k={4} />
          <Caret />
          <BarGroup $gap={7} $ml={5}>
            <BoxView />
            <CubeBlue />
          </BarGroup>
        </BarGroup>
        <BarSelect $w={176} $off $gap={2}>
          单个面
          <Caret $c="#aaa" />
        </BarSelect>
        <BarSelect $w={176} $gap={3}>
          单条曲线
          <Caret />
        </BarSelect>
        <Arrow />
        <BarSep />
        <BarGroup $gap={9}>
          <ZoomFit />
          <PanHand />
          <OrbitIcon />
          <PrismDot />
          <GhostSheet />
          <LayoutGrid />
          <Caret />
          <ScannerIcon />
          <Caret />
          <CubeBlue faint />
        </BarGroup>
      </SelectBar>

      <Workspace>
        <Navigator>
          <NavTable>
            <NavRow $head>
              <NavCell $cut>刀</NavCell>
              <NavCell>刀具</NavCell>
              <NavCell />
              <NavCell />
              <NavCell />
            </NavRow>
            {Array.from({ length: 23 }, (_, i) => (
              <NavRow key={i} $alt={i % 2 === 1}>
                <NavCell $cut>{navMarks[i] && <NavCheck />}</NavCell>
                <NavCell>{navMarks[i] && <NavMark $c={navMarks[i]} />}</NavCell>
                <NavCell />
                <NavCell />
                <NavCell />
              </NavRow>
            ))}
          </NavTable>
        </Navigator>

        <ViewColumn>
          <ViewTabs />
          <Canvas>
            <SketchRect $l={364} $t={267} $w={461} $h={231} />
            <SketchRect $l={502} $t={428} $w={185} $h={70} />
            <Triad width={110} height={100} viewBox="0 0 110 100">
              <path d="M33.5 20c5 18 5 42 0 60-4-18-4-42 0-60z" fill="#2f9436" />
              <path d="M34 79c20-3 40-2 58 2-18 3-38 3-58-2z" fill="#c8323a" />
              <circle cx={34} cy={81} r={2.6} fill="#1c2fd8" />
              <text x={40} y={25} fontFamily="Liberation Sans" fontSize={13} fill="#3f9a48">
                YC
              </text>
              <text x={77} y={78} fontFamily="Liberation Sans" fontSize={13} fill="#d0424a">
                XC
              </text>
              <text x={35} y={83} fontFamily="Liberation Sans" fontSize={13} fill="#3f4ee8">
                ZC
              </text>
            </Triad>
            <Watermark>
              <BrandLogo />
              <WatermarkText>
                <WatermarkName>3D世界网</WatermarkName>
                <WatermarkUrl>WWW.3DSJW.COM</WatermarkUrl>
              </WatermarkText>
            </Watermark>
          </Canvas>
        </ViewColumn>
      </Workspace>

      <Dialog>
        <DialogTitle>
          <GearIcon />
          <DialogTitleText>部件边界</DialogTitleText>
          <Refresh />
          <CloseX />
        </DialogTitle>
        <DialogBody>
          <Section $pb={7}>
            <SectionHead>
              边界
              <Chevron up big />
            </SectionHead>
            <FieldRow>
              <FieldLabel>选择方法</FieldLabel>
              <FieldSelect>
                <CurveIcon />
                <FieldValue>曲线</FieldValue>
                <Caret />
              </FieldSelect>
            </FieldRow>
            <PickRow>
              <PickMain>
                <PickStar>*</PickStar>
                选择曲线 (0)
              </PickMain>
              <PickSide>
                <CurveIcon s={24} />
              </PickSide>
            </PickRow>
            {fieldRows.map((r) => (
              <FieldRow key={r.label}>
                <FieldLabel>{r.label}</FieldLabel>
                <FieldSelect>
                  <FieldValue>{r.value}</FieldValue>
                  <Caret />
                </FieldSelect>
              </FieldRow>
            ))}
            <Panel>
              <PanelHead>
                定制边界数据
                <Chevron />
              </PanelHead>
            </Panel>
            <AddRow>
              <FieldLabel>添加新集</FieldLabel>
              <AddBtn>
                <AddSet />
              </AddBtn>
            </AddRow>
            <Panel>
              <ListHead>
                列表
                <Chevron up />
              </ListHead>
              <ListBody>
                <ListTable>
                  <ListRow $head>
                    <ListCell $head>方法</ListCell>
                    <ListCell $head>类型</ListCell>
                    <ListCell $head>刀具侧</ListCell>
                  </ListRow>
                  <ListRow $sel>
                    <ListCell>新建</ListCell>
                    <ListCell />
                    <ListCell />
                  </ListRow>
                  <ListRow>
                    <ListCell />
                    <ListCell />
                    <ListCell />
                  </ListRow>
                  <ScrollBar>
                    <ScrollEnd>
                      <ScrollArrow />
                    </ScrollEnd>
                    <ScrollThumb />
                    <ScrollEnd>
                      <ScrollArrow right />
                    </ScrollEnd>
                  </ScrollBar>
                </ListTable>
                <ClearBtn>
                  <ClearX />
                </ClearBtn>
              </ListBody>
            </Panel>
          </Section>
          <Section $pb={7}>
            <SectionHead>
              成员
              <Chevron up big />
            </SectionHead>
            <Panel>
              <PanelHead>
                列表
                <Chevron />
              </PanelHead>
            </Panel>
          </Section>
          <ExpandStrip>
            <Caret $up />
          </ExpandStrip>
        </DialogBody>
        <DialogFoot>
          <FootBtn $primary>确定</FootBtn>
          <FootBtn>取消</FootBtn>
        </DialogFoot>
      </Dialog>

      <RedBox />
      <RedArrow width={135} height={225} viewBox="900 190 135 225">
        <polygon points="1028,197 1011,206 1016,208 909,410 1024,212 1027,213" fill="#fb2115" />
      </RedArrow>
      <RedNote>
        <NoteLatin>NX12.0</NoteLatin>为什么没有在相交处停止了?
      </RedNote>
    </Page>
  );
};

export default App;
